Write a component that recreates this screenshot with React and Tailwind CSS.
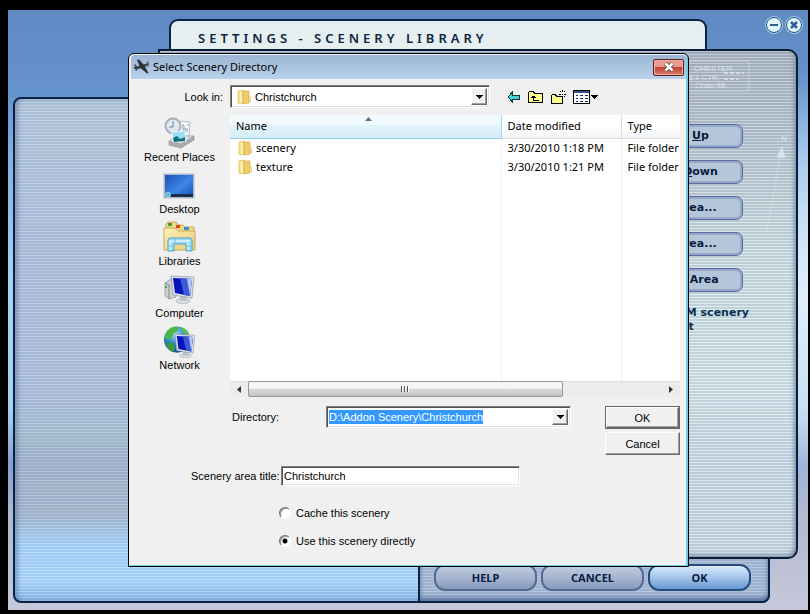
import { useEffect, useRef } from "react";

const actions = [
  { before: "Move ", key: "U", after: "p" },
  { before: "Move ", key: "D", after: "own" },
  { before: "Add Area...", key: "", after: "" },
  { before: "Edit Area...", key: "", after: "" },
  { before: "Delete Area", key: "", after: "" },
];

const files = [
  { name: "scenery", date: "3/30/2010 1:18 PM", type: "File folder" },
  { name: "texture", date: "3/30/2010 1:21 PM", type: "File folder" },
];

const places = [
  { name: "Recent Places", Icon: RecentIcon },
  { name: "Desktop", Icon: DesktopIcon },
  { name: "Libraries", Icon: LibrariesIcon },
  { name: "Computer", Icon: ComputerIcon },
  { name: "Network", Icon: NetworkIcon },
];

const sunken =
  "border border-t-[#808080] border-l-[#808080] border-r-white border-b-white bg-white shadow-[inset_1px_1px_0_#505050,inset_-1px_-1px_0_#e3e3e3]";
const raised =
  "border border-t-white border-l-white border-r-[#696969] border-b-[#696969] bg-[#f0f0f0] shadow-[inset_-1px_-1px_0_#a0a0a0]";

function RecentIcon() {
  return (
    <svg width="32" height="32" viewBox="0 0 32 32">
      <path d="M16 4 L26 5 L25 19 L15 18 Z" fill="#f7fafc" stroke="#b4bcc4" />
      <path d="M18 8h2M18 10h3M18 12h6M18 14h6M23 8h2" stroke="#7f93a5" />
      <circle cx="9" cy="9" r="7.5" fill="#dfe8ee" stroke="#a5b0b8" strokeWidth="2" />
      <path d="M9 4v6H5" stroke="#6f8596" fill="none" />
      <path d="M5 24 L17 27 L30 19 L30 23 L17 31 L5 28 Z" fill="#a9adb0" stroke="#878b8e" strokeWidth=".6" />
      <path d="M5 24 L12 19 L30 19 L17 27 Z" fill="#dcdfe1" stroke="#8d9295" strokeWidth=".6" />
      <path d="M8 15 L21 14 L22 24 L9 25 Z" fill="#9bdcf5" stroke="#eef6fa" />
      <path d="M9 21 L13 19 L16 22 L21 20 V24 L10 25 Z" fill="#136f80" />
    </svg>
  );
}

function DesktopIcon() {
  return (
    <svg width="32" height="32" viewBox="0 0 32 32">
      <defs>
        <linearGradient id="desk" x1="0" y1="0" x2="1" y2="1">
          <stop offset="0" stopColor="#1c50b8" />
          <stop offset=".55" stopColor="#3d86e8" />
          <stop offset="1" stopColor="#174db4" />
        </linearGradient>
      </defs>
      <rect x="1" y="5" width="30" height="24" fill="#b9c8dc" stroke="#8698b0" strokeWidth=".6" />
      <rect x="2" y="6" width="28" height="22" fill="url(#desk)" />
      <rect x="2" y="25" width="28" height="3" fill="#1a2c48" />
      <circle cx="5" cy="26" r="2.6" fill="#5ebbd8" stroke="#c5f1ff" strokeWidth=".6" />
    </svg>
  );
}

function LibrariesIcon() {
  return (
    <svg width="34" height="32" viewBox="0 0 34 32">
      <defs>
        <linearGradient id="lib" x1="0" y1="0" x2="1" y2="1">
          <stop offset="0" stopColor="#fff2b8" />
          <stop offset="1" stopColor="#e9c874" />
        </linearGradient>
      </defs>
      <path d="M3 8V3l2-2h8l2 3h5l2 2h9v8H3z" fill="#f2d786" stroke="#c9aa5c" />
      <rect x="5" y="2" width="4" height="3" fill="#35a32e" />
      <rect x="13" y="4" width="4" height="3" fill="#d24a24" />
      <rect x="21" y="6" width="5" height="3" fill="#368ec4" />
      <path d="M1 7h11l3 3h17v19H1z" fill="url(#lib)" stroke="#c9aa5c" />
      <path d="M5 30V19q0-2 2-2h20q2 0 2 2v11h-6v-7H11v7z" fill="#9bdaf1" stroke="#4ba4cb" />
      <path d="M7 29V20h20M25 29v-7" stroke="#e0f8ff" fill="none" strokeWidth="1.5" />
      <path d="M5 25h6M23 25h6M12 17v5" stroke="#73bedc" />
    </svg>
  );
}

function Monitor() {
  return (
    <g>
      <ellipse cx="21" cy="28" rx="7" ry="2.6" fill="#dbe0e4" stroke="#9ca3a9" strokeWidth=".6" />
      <path d="M18 22h6l1 6h-7z" fill="#bac1c7" />
      <path d="M9 3 L32 4 L30 25 L11 22 Z" fill="#dde2e8" stroke="#8b949e" strokeWidth=".7" />
      <path d="M11 5 L30 6 L28 23 L13 20 Z" fill="#0714bd" />
      <path d="M18 5 L30 6 L28 23 L22 22 Z" fill="#3d5ad6" />
      <path d="M25 6 L30 6 L28 23 Z" fill="#b4c5f4" />
    </g>
  );
}

function ComputerIcon() {
  return (
    <svg width="34" height="32" viewBox="0 0 34 32">
      <path d="M3 10 L9 6 L14 8 V24 L7 26 L3 23 Z" fill="#cdd1d4" stroke="#8b9195" strokeWidth=".7" />
      <path d="M3 10 L7 12 V26" stroke="#7e8488" fill="none" />
      <path d="M4 13v2" stroke="#41a33d" strokeWidth="2" />
      <Monitor />
    </svg>
  );
}

function NetworkIcon() {
  return (
    <svg width="34" height="34" viewBox="0 0 34 34">
      <defs>
        <radialGradient id="globe" cx=".4" cy=".25" r=".8">
          <stop offset="0" stopColor="#a6e0fa" />
          <stop offset=".5" stopColor="#2c83cb" />
          <stop offset="1" stopColor="#12468f" />
        </radialGradient>
      </defs>
      <circle cx="14" cy="15" r="13.5" fill="url(#globe)" />
      <path d="M5 5Q10 0 16 2L14 7L10 9L8 14L2 15Q1 9 5 5Z" fill="#4bb748" />
      <path d="M18 2Q25 4 27 11L22 9L19 6Z" fill="#64bd53" />
      <path d="M5 17L10 19L12 24L10 28Q4 25 3 20Z" fill="#389d3c" />
      <g transform="translate(4 7) scale(.88)">
        <Monitor />
      </g>
    </svg>
  );
}

function FolderIcon() {
  return (
    <svg width="14" height="16" viewBox="0 0 14 16" className="shrink-0">
      <path d="M1 2l5-1v13l-4 1-1-1z" fill="#f8e28f" stroke="#dcb951" strokeWidth=".7" />
      <path d="M6 2h6v12l-6 1z" fill="#efce68" stroke="#d3ac42" strokeWidth=".7" />
      <path d="M4 3v11" stroke="#fff5c5" strokeWidth="1.5" />
      <path d="M12 8h1.500v5H12z" fill="#fff9d8" stroke="#cda440" strokeWidth=".5" />
    </svg>
  );
}

function PlaneIcon() {
  return (
    <svg width="17" height="16" viewBox="0 0 17 16">
      <path d="M0 8.500L8 6.500l7-2.500 1 .5-.5 1.500-6 3-7 1.500z" fill="#3b4048" />
      <path d="M4 1l2-.5 5 5.500 4.500 8-1.500.5L7.500 9z" fill="#2c3138" />
      <path d="M1 5.500l1.500 0 2.500 3-1.500 3.500-1-.5.5-2z" fill="#3b4048" />
      <path d="M15 2v6" stroke="#555b64" />
    </svg>
  );
}

function BackIcon() {
  return (
    <svg width="14" height="14" viewBox="0 0 14 14" shapeRendering="crispEdges">
      <path d="M1 7l4-4.500v2.500h7.500v4H5v2.500z" fill="#3fd4d4" stroke="#12383c" />
    </svg>
  );
}

function UpIcon() {
  return (
    <svg width="17" height="14" viewBox="0 0 17 14" shapeRendering="crispEdges">
      <path d="M1.500 12.500v-10l1-1h4l1 2h8v9z" fill="#ffff8c" stroke="#000" />
      <path d="M6.500 6v4.500H12M4 7.500h5M5 6.500h3" stroke="#000" fill="none" />
    </svg>
  );
}

function NewFolderIcon() {
  return (
    <svg width="17" height="16" viewBox="0 0 17 16" shapeRendering="crispEdges">
      <path d="M1.500 14.500v-8l1-1h3l1 2h6v7z" fill="#ffff8c" stroke="#000" />
      <path d="M12.500 1v2M12.500 7v2M9 5h2M14 5h2M10 2l1 1M15 2l-1 1M15 8l-1-1M12 5h1" stroke="#000" />
    </svg>
  );
}

function ViewIcon() {
  return (
    <svg width="26" height="14" viewBox="0 0 26 14" shapeRendering="crispEdges">
      <rect x=".5" y=".5" width="16" height="13" fill="#fff" stroke="#000" />
      <rect x="1" y="1" width="15" height="2" fill="#31578f" />
      <path d="M3 5.500h2M7 5.500h3M12 5.500h3M3 8.500h2M7 8.500h3M12 8.500h3M3 11.500h2M7 11.500h3M12 11.500h3" stroke="#1b2a64" />
      <path d="M18 5h7l-3.500 4z" fill="#000" />
    </svg>
  );
}

function DownButton() {
  return (
    <button
      type="button"
      aria-label="Open list"
      className={`m-[2px] ml-0 flex w-4 shrink-0 items-center justify-center ${raised}`}
    >
      <svg width="7" height="4" viewBox="0 0 7 4" shapeRendering="crispEdges">
        <path d="M0 0h7L3.500 4z" />
      </svg>
    </button>
  );
}

function Scrollbar() {
  return (
    <div className="flex h-4 bg-[#ececec] shadow-[inset_0_1px_0_#dedede]">
      <button type="button" aria-label="Scroll left" className="flex w-[18px] items-center justify-center">
        <svg width="4" height="7" viewBox="0 0 4 7">
          <path d="M4 0v7L0 3.500z" fill="#333" />
        </svg>
      </button>
      <div className="flex flex-1">
        <div className="flex w-[76%] items-center justify-center gap-px rounded-[2px] border border-[#979797] bg-linear-to-b from-[#f5f5f5] from-45% via-[#dadada] via-50% to-[#c2c2c2]">
          <span className="h-[6px] w-[2px] border-l border-[#555] bg-white" />
          <span className="h-[6px] w-[2px] border-l border-[#555] bg-white" />
          <span className="h-[6px] w-[2px] border-l border-[#555] bg-white" />
        </div>
      </div>
      <button type="button" aria-label="Scroll right" className="flex w-[18px] items-center justify-center">
        <svg width="4" height="7" viewBox="0 0 4 7">
          <path d="M0 0v7l4-3.500z" fill="#333" />
        </svg>
      </button>
    </div>
  );
}

function FileList() {
  return (
    <div className="flex h-[282px] min-w-0 flex-col bg-white font-['Noto_Sans',sans-serif] text-[11px] leading-[16px]">
      <div className="min-h-0 flex-1 overflow-hidden">
        <table className="h-full w-full table-fixed border-collapse text-left">
          <colgroup>
            <col />
            <col className="w-[120px]" />
            <col className="w-[59px]" />
          </colgroup>
          <thead>
            <tr className="h-[23px]">
              <th className="relative border-r border-b border-r-[#96d9f9] border-b-[#96d0e6] bg-linear-to-b from-[#f2fafd] from-40% via-[#e2f3fa] via-45% to-[#d5edf7] p-0 pl-[6px] font-normal">
                Name
                <svg width="7" height="4" viewBox="0 0 7 4" className="absolute top-[2px] left-1/2">
                  <path d="M0 4l3.500-4L7 4z" fill="#52788c" />
                </svg>
              </th>
              <th className="border-r border-b border-[#d9dce0] bg-linear-to-b from-white from-50% to-[#f3f4f6] p-0 pl-[6px] font-normal">
                Date modified
              </th>
              <th className="border-b border-[#d9dce0] bg-linear-to-b from-white from-50% to-[#f3f4f6] p-0 pl-[6px] font-normal">
                Type
              </th>
            </tr>
          </thead>
          <tbody>
            {files.map((file) => (
              <tr key={file.name} className="h-[19px] whitespace-nowrap">
                <td className="border-r border-[#ebf4f9] p-0 pl-2">
                  <span className="flex items-center gap-[4px]">
                    <FolderIcon />
                    {file.name}
                  </span>
                </td>
                <td className="border-r border-[#eeeeee] p-0 pl-[6px]">{file.date}</td>
                <td className="p-0 pl-[6px]">{file.type}</td>
              </tr>
            ))}
            <tr>
              <td className="border-r border-[#ebf4f9]" />
              <td className="border-r border-[#eeeeee]" />
              <td />
            </tr>
          </tbody>
        </table>
      </div>
      <Scrollbar />
    </div>
  );
}

function DirectoryDialog() {
  const directory = useRef(null);

  useEffect(() => {
    directory.current.focus();
    directory.current.select();
  }, []);

  return (
    <div
      role="dialog"
      aria-labelledby="dialog-title"
      className="absolute top-[43px] right-[119px] left-[120px] flex flex-col rounded-t-[6px] border border-black bg-[#f0f0f0] text-[11px] leading-[14px] text-black shadow-[inset_1px_1px_0_#eafaff,inset_-2px_-1px_0_#74cde0]"
    >
      <div className="mx-[2px] mt-px flex h-6 items-center justify-between rounded-t-[4px] bg-linear-to-b from-[#9bb5d4] to-[#b9d1ea] pr-[2px] pl-[2px]">
        <h2 id="dialog-title" className="flex items-center gap-[3px] font-['Noto_Sans',sans-serif] text-[11px] leading-[16px]">
          <PlaneIcon />
          Select Scenery Directory
        </h2>
        <button
          type="button"
          aria-label="Close"
          className="flex h-[17px] w-[31px] items-center justify-center rounded-[2px] border border-[#5d1c1e] bg-linear-to-b from-[#e59a8d] from-45% via-[#c4402c] via-50% to-[#d6796a] shadow-[inset_0_0_0_1px_#eeb0a6]"
        >
          <svg width="12" height="10" viewBox="0 0 12 10">
            <path d="M2.500 1.500l7 7M9.500 1.500l-7 7" stroke="#5a3a3c" strokeWidth="4" />
            <path d="M2.500 1.500l7 7M9.500 1.500l-7 7" stroke="#fff" strokeWidth="2.500" />
          </svg>
        </button>
      </div>

      <div className="flex items-center pt-[6px]">
        <label htmlFor="look-in" className="w-[94px] text-right">
          Look in:
        </label>
        <div className={`ml-[7px] flex h-[23px] w-[260px] ${sunken}`}>
          <span className="flex flex-1 items-center gap-[4px] pl-[6px]">
            <FolderIcon />
            <select id="look-in" className="w-full flex-1 appearance-none bg-transparent outline-none">
              <option>Christchurch</option>
            </select>
          </span>
          <DownButton />
        </div>
        <div className="ml-[17px] flex items-center gap-[6px]">
          <button type="button" aria-label="Back">
            <BackIcon />
          </button>
          <button type="button" aria-label="Up one level">
            <UpIcon />
          </button>
          <button type="button" aria-label="New folder">
            <NewFolderIcon />
          </button>
          <button type="button" aria-label="View menu">
            <ViewIcon />
          </button>
        </div>
      </div>

      <div className="grid grid-cols-[101px_minmax(0,1fr)] pt-[7px] pr-2">
        <nav className="flex flex-col items-center pt-[2px]">
          {places.map(({ name, Icon }) => (
            <button key={name} type="button" className="flex h-[52px] flex-col items-center justify-between pb-[5px]">
              <Icon />
              {name}
            </button>
          ))}
        </nav>
        <FileList />
      </div>

      <div className="flex items-start justify-between pt-[9px] pr-2 pl-[103px]">
        <div className="flex items-center">
          <label htmlFor="directory" className="w-[94px]">
            Directory:
          </label>
          <div className={`flex h-[22px] w-[245px] ${sunken}`}>
            <input
              id="directory"
              ref={directory}
              type="text"
              defaultValue="D:\Addon Scenery\Christchurch"
              className="w-full min-w-0 flex-1 bg-transparent pl-[2px] outline-none selection:bg-[#3399ff] selection:text-white"
            />
            <DownButton />
          </div>
        </div>
        <div className="flex w-[75px] flex-col gap-[3px]">
          <div className="border border-[#646464]">
            <button type="button" className={`h-[21px] w-full ${raised}`}>
              OK
            </button>
          </div>
          <button type="button" className={`h-[23px] ${raised}`}>
            Cancel
          </button>
        </div>
      </div>

      <div className="flex items-center pt-[11px] pl-[62px]">
        <label htmlFor="area-title" className="w-[90px]">
          Scenery area title:
        </label>
        <input
          id="area-title"
          type="text"
          defaultValue="Christchurch"
          className={`h-5 w-[239px] pl-[2px] outline-none ${sunken}`}
        />
      </div>

      <div className="flex flex-col gap-[14px] pt-5 pb-[18px] pl-[150px]">
        <label className="flex items-center gap-[5px]">
          <SceneryRadio />
          Cache this scenery
        </label>
        <label className="flex items-center gap-[5px]">
          <SceneryRadio defaultChecked />
          Use this scenery directly
        </label>
      </div>
    </div>
  );
}

function SceneryRadio({ defaultChecked }) {
  return (
    <input
      type="radio"
      name="scenery-mode"
      defaultChecked={defaultChecked}
      className="h-3 w-3 appearance-none rounded-full border border-t-[#707070] border-r-white border-b-white border-l-[#707070] bg-white shadow-[inset_1px_1px_0_#909090] checked:bg-[radial-gradient(circle,#000_2px,#fff_3px)]"
    />
  );
}

function PillButton({ children, bright }) {
  return (
    <button
      type="button"
      className={`h-[27px] w-[103px] rounded-[11px] border-2 text-[11px] leading-[14px] font-bold text-[#061c42] shadow-[0_0_0_1px_#a9bcd6] ${
        bright
          ? "border-[#264c7e] bg-linear-to-b from-[#d9e9fa] via-[#a5c5ea] to-[#6497d3]"
          : "border-[#546a92] bg-linear-to-b from-[#c0cde0] via-[#a6b5cf] to-[#8799bc]"
      }`}
    >
      {children}
    </button>
  );
}

function MapMarks() {
  return (
    <svg width="110" height="200" viewBox="0 0 110 200" className="absolute top-0 right-0 font-['Liberation_Sans',sans-serif]">
      <rect x="0" y="10" width="63" height="30" rx="2" fill="none" stroke="#d5dde5" strokeOpacity=".7" />
      <g fill="#e4ebf0" fillOpacity=".85" fontSize="8">
        <text x="8" y="20">CHESTER</text>
        <text x="2" y="29">5.1 CTR</text>
        <text x="9" y="37">Chan 98</text>
        <text x="95" y="90">N</text>
      </g>
      <path d="M38 22h20M38 28h14" stroke="#e4ebf0" strokeOpacity=".7" strokeDasharray="4 2" strokeWidth="2" />
      <path d="M80 185L95 100M91 106l5-10 3 11z" stroke="#dbe3ea" strokeOpacity=".6" fill="#dbe3ea" />
    </svg>
  );
}

export default function App() {
  return (
    <div className="flex min-h-screen flex-col bg-black pt-[10px] pr-[2px] pb-1 pl-2 font-['Liberation_Sans',sans-serif]">
      <main className="relative flex flex-1 flex-col bg-[radial-gradient(ellipse_160px_230px_at_100%_48%,#e2eefb,#e2eefb00),linear-gradient(180deg,#6089c3_0%,#6593cc_14%,#7fb0e0_24%,#a4d3f0_45%,#a9d3f0_66%,#869fcd_76%,#b2b7cf_84%,#c6c9da_100%)]">
        <header className="flex h-[39px] items-end">
          <div className="ml-[161px] flex h-[30px] flex-1 items-center rounded-t-[9px] border-2 border-b-0 border-[#0a2245] bg-[#e6eff0] pt-[6px] pl-[27px]">
            <h1 className="font-['Noto_Sans',sans-serif] text-[13px] leading-[16px] font-semibold tracking-[4px] whitespace-nowrap text-[#0d2440]">
              SETTINGS - SCENERY LIBRARY
            </h1>
          </div>
          <div className="flex w-[101px] justify-end gap-[4px] self-start pt-[7px] pr-[6px]">
            <button
              type="button"
              aria-label="Minimize"
              className="flex h-4 w-4 items-center justify-center rounded-full border border-[#235284] bg-[#e3f6fc] shadow-[0_0_0_1px_#a5cce9]"
            >
              <span className="h-[2px] w-2 bg-[#2a5f95]" />
            </button>
            <button
              type="button"
              aria-label="Close window"
              className="flex h-4 w-4 items-center justify-center rounded-full border border-[#235284] bg-[#e3f6fc] shadow-[0_0_0_1px_#a5cce9]"
            >
              <svg width="8" height="8" viewBox="0 0 8 8">
                <path d="M1 1l6 6M7 1L1 7" stroke="#2a5f95" strokeWidth="2.500" />
              </svg>
            </button>
          </div>
        </header>

        <div className="grid flex-1 grid-cols-[5px_145px_260px_minmax(0,1fr)_28px_10px] grid-rows-[48px_1fr_44px_7px]">
          <div className="col-start-2 col-end-5 row-start-2 row-end-4 rounded-[8px] border-2 border-[#0a2245] bg-[repeating-linear-gradient(180deg,#ffffff30_0px,#ffffff30_1px,#5c7cab1c_1px,#5c7cab1c_3px),linear-gradient(180deg,#b4c8da_0%,#b0c1dc_25%,#adbfdb_60%,#a4bfcd_68%,#a3b3cb_71%,#a5b5cb_82%,#a9d3fb_89%,#acd7ff_96%,#8fb8e8_100%)] shadow-[inset_3px_0_4px_#52709c88]" />
          <div className="col-start-4 col-end-5 row-start-2 row-end-4 flex items-end justify-end gap-[4px] rounded-br-[8px] border-2 border-[#0a2245] bg-[repeating-linear-gradient(180deg,#ffffff30_0px,#ffffff30_1px,#7290b830_1px,#7290b830_3px),linear-gradient(180deg,#9fb2cf,#a7bad5)] pr-[17px] pb-[10px] font-['Noto_Sans',sans-serif] shadow-[inset_0_-3px_5px_#536f9c]">
            <PillButton>HELP</PillButton>
            <PillButton>CANCEL</PillButton>
            <PillButton bright>OK</PillButton>
          </div>
          <section className="relative col-start-3 col-end-6 row-start-1 row-end-3 flex flex-col items-end rounded-tr-[10px] rounded-br-[10px] border-2 border-[#0a1c38] bg-[repeating-linear-gradient(180deg,#ffffff50_0px,#ffffff50_1px,#8199ad40_1px,#8199ad40_3px),linear-gradient(180deg,#a7b1bf_0%,#b5c1cd_15%,#d0e1e4_40%,#d8e9ea_65%,#cddce8_80%,#cddce6_100%)] pt-[73px] shadow-[inset_-2px_-2px_4px_#7b90a9]">
            <MapMarks />
            <div className="relative flex flex-col gap-[12px] pr-[53px]">
              {actions.map(({ before, key, after }) => (
                <button
                  key={before + key}
                  type="button"
                  className="h-6 w-[122px] rounded-[7px] border border-[#596b9c] bg-[#b4c7da] font-['DejaVu_Sans',sans-serif] text-[11px] leading-[14px] font-bold text-[#091b3e] shadow-[inset_0_0_0_2px_#97a6cb]"
                >
                  {before}
                  {key && <span className="underline">{key}</span>}
                  {after}
                </button>
              ))}
            </div>
            <p className="relative mr-[46px] w-[104px] pt-[14px] font-['DejaVu_Sans',sans-serif] text-[11px] leading-[14px] font-bold text-[#0b3058]">
              CD-ROM scenery content
            </p>
          </section>
        </div>

        <DirectoryDialog />
      </main>
    </div>
  );
}
